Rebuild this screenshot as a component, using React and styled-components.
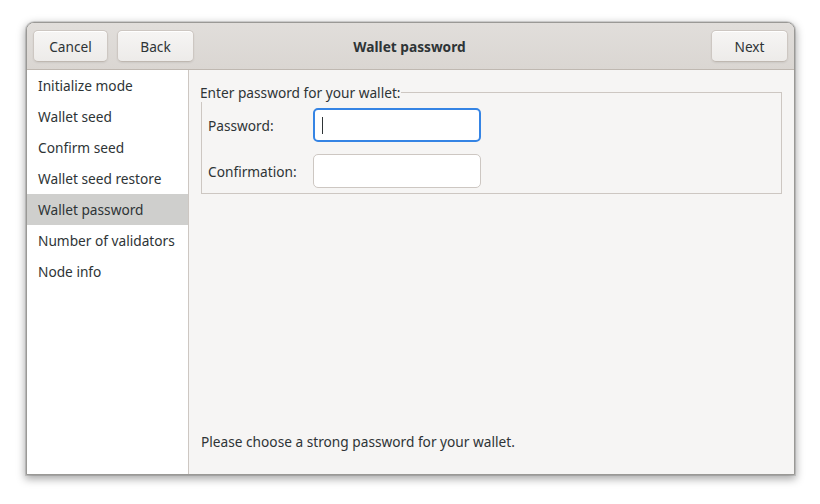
import styled, { createGlobalStyle } from 'styled-components';

const Global = createGlobalStyle`
  body {
    margin: 0;
    background: #ffffff;
    font-family: "Noto Sans", "DejaVu Sans", sans-serif;
    color: #2e3436;
  }
`

const Page = styled.div`
  padding: 22px 0 0 26px;
  height: 504px;
  box-sizing: border-box;
`

const Window = styled.div`
  width: 769px;
  height: 453px;
  display: flex;
  flex-direction: column;
  border: 1px solid #9a9996;
  border-radius: 8px 8px 0 0;
  box-sizing: border-box;
  box-shadow: 0 3px 9px 1px rgba(0,0,0,0.35), 0 0 0 1px rgba(0,0,0,0.12);
  overflow: hidden;
  background: #f6f5f4;
`

const HeaderBar = styled.div`
  height: 46px;
  flex: none;
  display: flex;
  align-items: center;
  padding: 0 6px;
  gap: 9px;
  background: linear-gradient(#e1dedb, #dad6d2);
  border-bottom: 1px solid #bfb8b1;
`

const Button = styled.button`
  height: 32px;
  min-width: ${p => p.w || 76}px;
  padding: 0 14px;
  border: 1px solid #cdc7c2;
  border-bottom-color: #bfb8b1;
  border-radius: 5px;
  background: linear-gradient(#f6f5f4, #edebe9);
  box-shadow: inset 0 1px #fff, 0 1px 2px rgba(0,0,0,0.07);
  font-family: inherit;
  font-size: 13.7px;
  color: #2e3436;
`

const Title = styled.div`
  flex: 1;
  text-align: center;
  font-weight: bold;
  font-size: 13.7px;
  padding-right: 86px;
`

const Body = styled.div`
  flex: 1;
  display: flex;
  min-height: 0;
`

const Sidebar = styled.ul`
  width: 161px;
  flex: none;
  margin: 0;
  padding: 0;
  list-style-type: none;
  background: #ffffff;
  border-right: 1px solid #cdc7c2;
`

const Item = styled.li`
  height: 31px;
  line-height: 31px;
  padding-left: 11px;
  font-size: 13.7px;
  background: ${p => p.active ? '#cfcfcd' : 'transparent'};
`

const Content = styled.div`
  flex: 1;
  display: flex;
  flex-direction: column;
  padding: 13px 12px 23px 12px;
`

const Frame = styled.fieldset`
  margin: 0;
  padding: 6px 6px 5px 6px;
  border: 1px solid #cdc7c2;
  display: grid;
  grid-template-columns: 105px 168px;
  row-gap: 12px;
  align-items: center;
`

const Legend = styled.legend`
  padding: 0;
  margin-left: -8px;
  font-size: 13.7px;
`

const Label = styled.label`
  font-size: 13.7px;
`

const Entry = styled.div`
  height: 34px;
  box-sizing: border-box;
  border-radius: 5px;
  background: #ffffff;
  border: ${p => p.focus ? '2px solid #3584e4' : '1px solid #cdc7c2'};
  display: flex;
  align-items: center;
  padding-left: ${p => p.focus ? 7 : 8}px;
`

const Caret = styled.span`
  width: 1px;
  height: 17px;
  background: #2e3436;
`

const Hint = styled.p`
  margin: auto 0 0 0;
  font-size: 13.7px;
`

const steps = [
  'Initialize mode',
  'Wallet seed',
  'Confirm seed',
  'Wallet seed restore',
  'Wallet password',
  'Number of validators',
  'Node info',
]

const App = () => {
  return <>
    <Global />
    <Page>
      <Window>
        <HeaderBar>
          <Button w={75}>Cancel</Button>
          <Button w={77}>Back</Button>
          <Title>Wallet password</Title>
          <Button w={77}>Next</Button>
        </HeaderBar>
        <Body>
          <Sidebar>
            {steps.map(s => <Item key={s} active={s === 'Wallet password'}>{s}</Item>)}
          </Sidebar>
          <Content>
            <Frame>
              <Legend>Enter password for your wallet:</Legend>
              <Label>Password:</Label>
              <Entry focus><Caret /></Entry>
              <Label>Confirmation:</Label>
              <Entry />
            </Frame>
            <Hint>Please choose a strong password for your wallet.</Hint>
          </Content>
        </Body>
      </Window>
    </Page>
  </>
}

export default App;
